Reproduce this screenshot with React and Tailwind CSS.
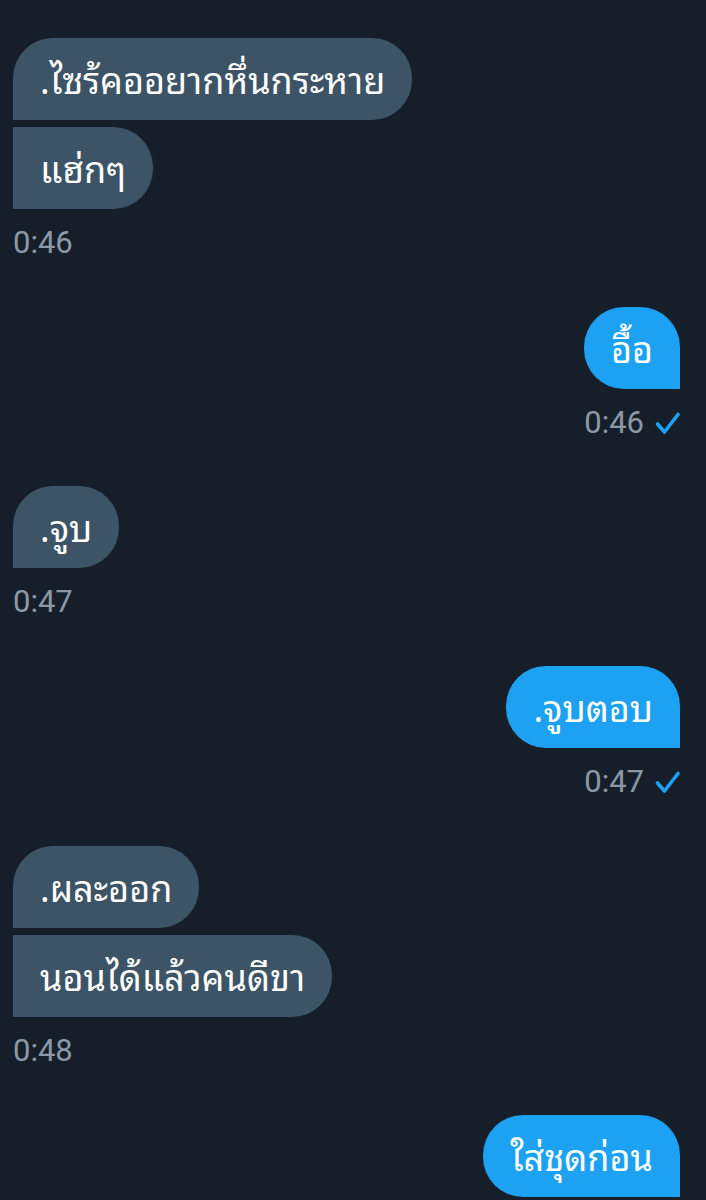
const font = { fontFamily: '"Noto Sans Thai Looped", "Loma", "Garuda", "Noto Sans", "Noto Sans Thai", sans-serif' }

function Check() {
  return (
    <svg width="25" height="23" viewBox="0 0 25 23" className="ml-[11px] mt-[1px]">
      <path d="M2.5 12 L9.5 20 L23 2.5" fill="none" stroke="#1da1f2" strokeWidth="3.6" strokeLinecap="round" strokeLinejoin="round" />
    </svg>
  )
}

function Received({ text, shape }) {
  return (
    <div
      className={`self-start bg-[#3d5466] text-white text-[36px] leading-[38px] pt-[21px] pb-[23px] px-[27px] ${shape}`}
      style={font}
    >
      {text}
    </div>
  )
}

function Sent({ text }) {
  return (
    <div
      className="self-end bg-[#1da1f2] text-white text-[36px] leading-[38px] pt-[21px] pb-[23px] px-[27px] rounded-[40px] rounded-br-none"
      style={font}
    >
      {text}
    </div>
  )
}

function Time({ t, sent }) {
  return (
    <div
      className={`mt-[18px] flex items-center h-[32px] text-[31px] leading-[32px] text-[#8b99a6] font-['Roboto'] ${sent ? 'self-end' : 'self-start'}`}
    >
      {t}
      {sent && <Check />}
    </div>
  )
}

export default function App() {
  return (
    <div className="w-[706px] h-[1200px] overflow-hidden bg-[#161f29] px-[13px] pr-[26px] pt-[38px] flex flex-col">
      <Received text=".ไซร้คออยากหึ่นกระหาย" shape="rounded-[40px] rounded-bl-none" />
      <div className="h-[7px]" />
      <Received text="แฮ่กๆ" shape="rounded-r-[40px]" />
      <Time t="0:46" />

      <div className="h-[48px]" />
      <Sent text="อื้อ" />
      <Time t="0:46" sent />

      <div className="h-[47px]" />
      <Received text=".จูบ" shape="rounded-[40px] rounded-bl-none" />
      <Time t="0:47" />

      <div className="h-[48px]" />
      <Sent text=".จูบตอบ" />
      <Time t="0:47" sent />

      <div className="h-[48px]" />
      <Received text=".ผละออก" shape="rounded-[40px] rounded-bl-none" />
      <div className="h-[7px]" />
      <Received text="นอนได้แล้วคนดีขา" shape="rounded-r-[40px]" />
      <Time t="0:48" />

      <div className="h-[48px]" />
      <Sent text="ใส่ชุดก่อน" />
    </div>
  )
}
